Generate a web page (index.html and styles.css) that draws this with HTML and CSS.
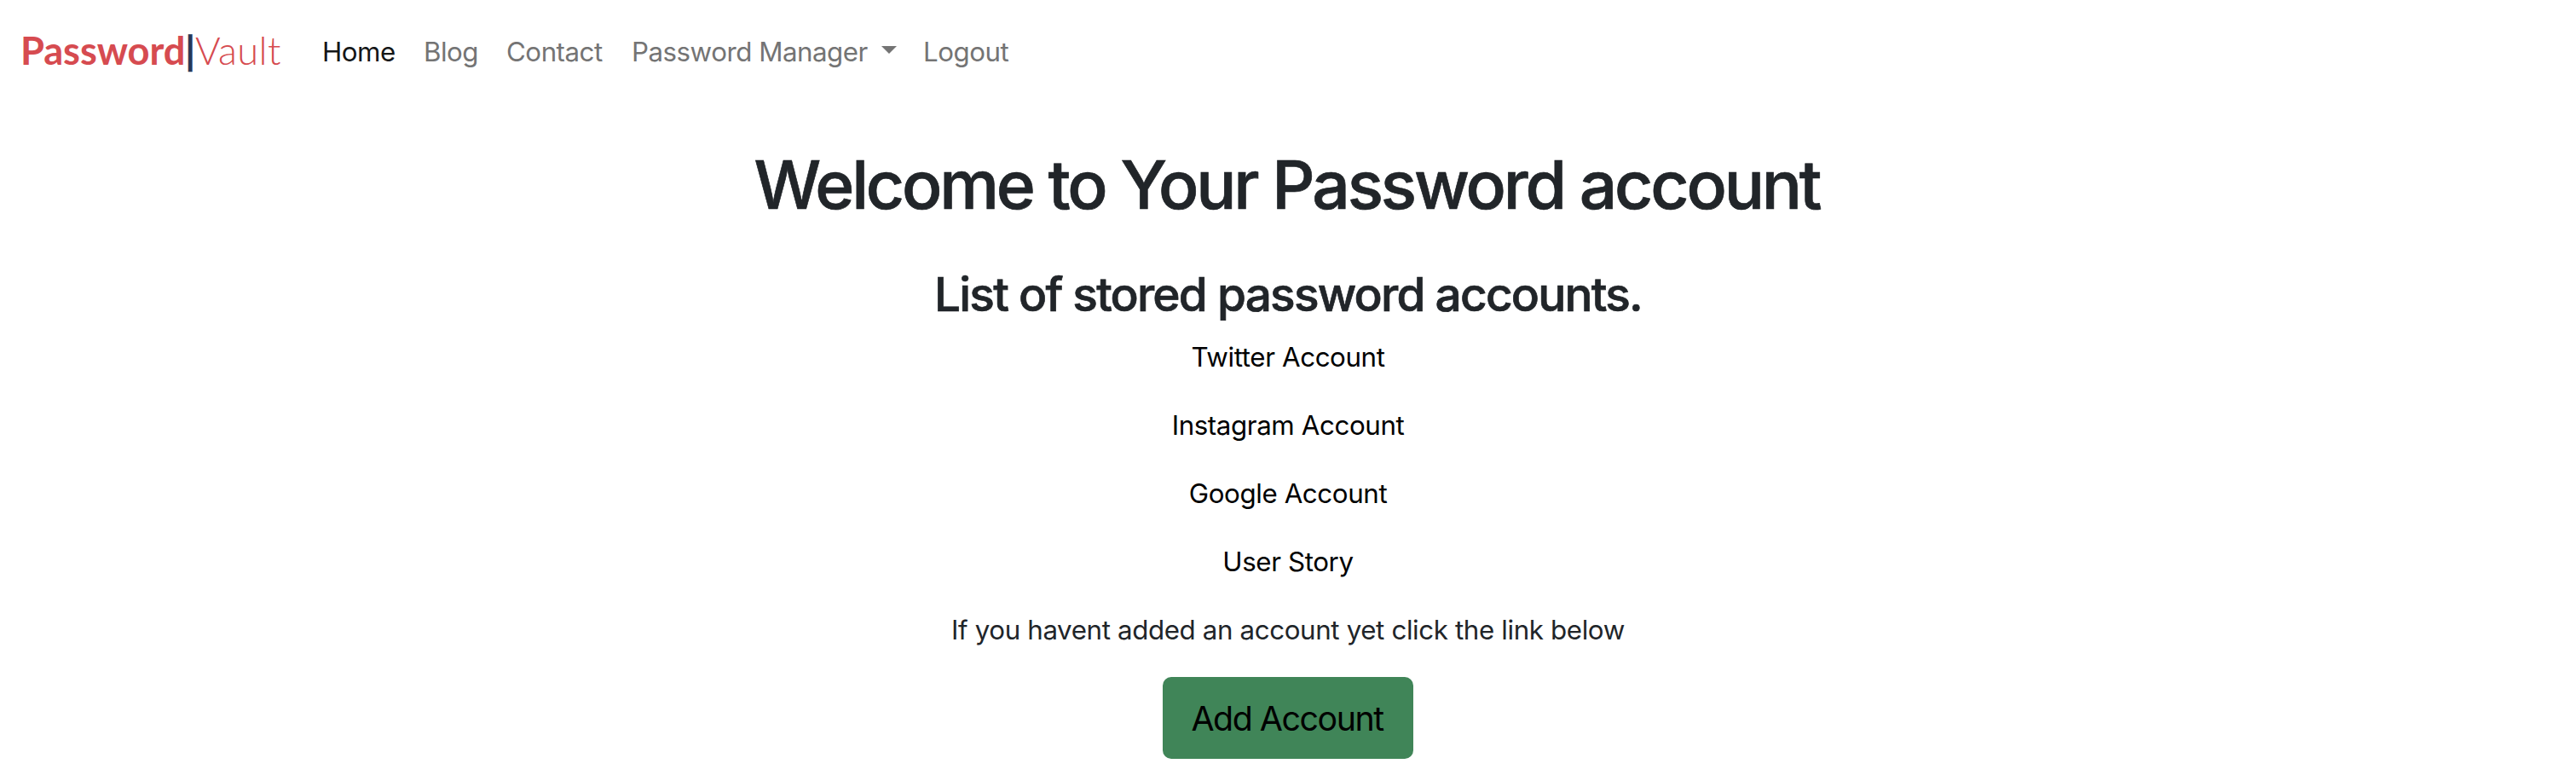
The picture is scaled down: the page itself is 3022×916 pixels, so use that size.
FILE: index.html
```html
<!DOCTYPE html>
<html lang="en">
<head>
<meta charset="utf-8">
<title>Password Vault</title>
<link rel="stylesheet" href="styles.css">
</head>
<body>
<nav class="navbar">
  <a class="brand"><span class="brand-bold">Password</span><span class="brand-bar">|</span><span class="brand-light">Vault</span></a>
  <a class="link home active">Home</a>
  <a class="link blog">Blog</a>
  <a class="link contact">Contact</a>
  <a class="link manager"><span class="label">Password Manager</span><svg class="caret" width="18" height="9" viewBox="0 0 18 9"><path d="M0 0H18L9 9Z" fill="currentColor"/></svg></a>
  <a class="link logout">Logout</a>
</nav>
<main class="content">
  <h1 class="title">Welcome to Your Password account</h1>
  <h2 class="subtitle">List of stored password accounts.</h2>
  <p class="item twitter">Twitter Account</p>
  <p class="item instagram">Instagram Account</p>
  <p class="item google">Google Account</p>
  <p class="item story">User Story</p>
  <p class="item hint">If you havent added an account yet click the link below</p>
  <a class="button"><span class="button-label">Add Account</span></a>
</main>
</body>
</html>
```
FILE: styles.css
```css
* { box-sizing: border-box; }
body { margin: 0; background: #fff; color: #212529; font: 31.3px/48px Inter, sans-serif; letter-spacing: -0.4px; }
.navbar { display: flex; align-items: center; height: 120px; padding: 2px 0 0 24px; white-space: nowrap; letter-spacing: -0.5px; }
.brand { flex: none; width: 354px; margin-bottom: 4px; font: 45.3px/60px Lato, sans-serif; color: #d64b50; letter-spacing: -0.1px; }
.brand-bold { font-weight: 700; }
.brand-bar { font-weight: 700; color: #253858; -webkit-text-stroke: 0.5px currentColor; }
.brand-light { font-weight: 300; letter-spacing: 0.4px; }
.link { flex: none; color: #747474; }
.home { width: 119px; }
.blog { width: 97px; }
.contact { width: 147px; }
.manager { display: flex; width: 342px; }
.active { color: #141617; }
.caret { margin: 17px 0 0 16px; }
.content { display: flex; flex-direction: column; align-items: center; white-space: nowrap; }
.title { margin: 49px 0 47px; padding-right: 3px; font-size: 78.5px; line-height: 96px; font-weight: 500; letter-spacing: -3.15px; -webkit-text-stroke: 0.7px currentColor; }
.subtitle { margin: 0 0 16px; font-size: 55px; line-height: 67px; font-weight: 500; letter-spacing: -1.8px; -webkit-text-stroke: 0.7px currentColor; }
.item { margin: 0 0 32px; color: #000; }
.hint { margin-bottom: 31px; color: #212529; letter-spacing: -0.38px; }
.button { display: flex; align-items: center; justify-content: center; width: 294px; height: 96px; padding: 2px 2px 0 0; border-radius: 10px; background: #408558; color: #000; font-size: 39.3px; letter-spacing: -1.45px; }
```
